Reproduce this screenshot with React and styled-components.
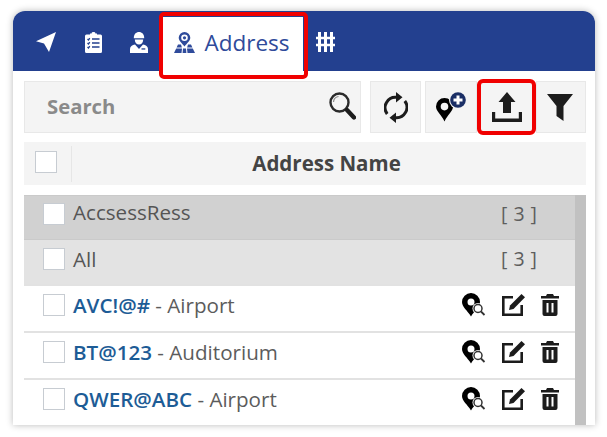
import React from 'react'
import styled, { createGlobalStyle } from 'styled-components'

const GlobalStyle = createGlobalStyle`
  html, body { margin: 0; padding: 0; background: #fff; }
  body { font-family: 'Open Sans', 'Noto Sans', sans-serif; }
`

const Page = styled.div`
  width: 607px;
  height: 437px;
  box-sizing: border-box;
  padding: 11px 12px 12px 13px;
  overflow: hidden;
`

const Card = styled.div`
  height: 414px;
  background: #fff;
  border-radius: 12px 12px 0 0;
  box-shadow: 0 0 7px rgba(0, 0, 0, 0.28);
  display: flex;
  flex-direction: column;
`

const TabBar = styled.div`
  height: 60px;
  flex: none;
  box-sizing: border-box;
  padding: 6px 0 0 10px;
  background: #23408f;
  border-radius: 12px 12px 0 0;
  display: flex;
  align-items: stretch;
`

const IconTab = styled.div`
  width: 46.5px;
  padding: 0 0 4px ${p => p.$shift || 0}px;
  box-sizing: border-box;
  display: flex;
  align-items: center;
  justify-content: center;
  color: #fff;
`

const ActiveTab = styled.div`
  width: 140px;
  position: relative;
  background: #fff;
  color: #2f4b9b;
  display: flex;
  align-items: center;
  gap: 10px;
  padding: 0 0 3px 11px;
  box-sizing: border-box;
  font-size: 22.5px;
  &::after {
    content: '';
    position: absolute;
    top: -5px;
    left: -4px;
    right: -5px;
    bottom: -8px;
    border: 4px solid #f00000;
    border-radius: 5px;
  }
`

const Toolbar = styled.div`
  display: flex;
  align-items: center;
  height: 56px;
  margin: 8px 9px 0 11px;
`

const SearchBox = styled.div`
  flex: 1;
  height: 52px;
  margin-right: 9px;
  box-sizing: border-box;
  background: #f4f4f4;
  border: 1px solid #e8e8e8;
  display: flex;
  align-items: center;
  justify-content: space-between;
  padding: 0 4px 2px 22px;
  font-size: 20.3px;
  font-weight: 700;
  color: #8a8a8a;
`

const ToolButton = styled.div`
  width: ${p => p.$w}px;
  height: 52px;
  margin-right: ${p => p.$gap || 0}px;
  padding-right: ${p => p.$nudge || 0}px;
  box-sizing: border-box;
  background: #f4f4f4;
  border: 1px solid #e8e8e8;
  display: flex;
  align-items: center;
  justify-content: center;
`

const MarkedButton = styled.div`
  width: 59px;
  height: 56px;
  box-sizing: border-box;
  background: #f4f4f4;
  border: 4px solid #f00000;
  border-radius: 6px;
  display: flex;
  align-items: center;
  justify-content: center;
`

const TableHead = styled.div`
  height: 43px;
  flex: none;
  margin: 7px 9px 0 11px;
  background: #f4f4f4;
  display: flex;
  align-items: center;
  font-size: 20.5px;
  font-weight: 700;
  color: #444;
`

const HeadCheck = styled.div`
  width: 48px;
  height: 36px;
  box-sizing: border-box;
  padding: 5px 0 0 11px;
  border-right: 1px solid #e6e6e6;
`

const HeadTitle = styled.div`
  flex: 1;
  text-align: center;
  padding: 0 5px 2px 0;
`

const Check = styled.div`
  width: 22px;
  height: 22px;
  flex: none;
  box-sizing: border-box;
  background: #fff;
  border: 1px solid #c7ccd2;
`

const ListArea = styled.div`
  flex: 1;
  min-height: 0;
  margin: 10px 9px 0 11px;
  display: flex;
`

const Rows = styled.div`
  flex: 1;
  display: flex;
  flex-direction: column;
`

const ScrollTrack = styled.div`
  width: 11px;
  flex: none;
  background: #c1c1c1;
`

const GroupRow = styled.div`
  height: ${p => p.$h}px;
  flex: none;
  box-sizing: border-box;
  padding: ${p => p.$top}px 38px 0 19px;
  background: ${p => p.$bg};
  border-top: 1px solid ${p => p.$line};
  display: flex;
  align-items: flex-start;
  gap: 8px;
  font-size: 20.6px;
  color: #555;
`

const GroupName = styled.div`
  flex: 1;
  line-height: 22px;
  margin-top: ${p => p.$lift || 0}px;
`

const Count = styled.div`
  font-size: 19.5px;
  line-height: 22px;
  color: #5e5e5e;
  word-spacing: 1px;
`

const ItemRow = styled.div`
  height: 47px;
  flex: none;
  box-sizing: border-box;
  padding: 0 16px 7px 19px;
  border-top: 2px solid #e2e2e2;
  display: flex;
  align-items: center;
  gap: 8px;
  font-size: 20.6px;
  color: #5c5c5c;
`

const ItemText = styled.div`
  flex: 1;
  white-space: nowrap;
`

const ItemCode = styled.span`
  font-weight: 600;
  color: #1d5c96;
`

const Actions = styled.div`
  display: flex;
  align-items: center;
  gap: 16px;
  color: #1c1c1c;
`

const NavIcon = () => (
  <svg width="20" height="20" viewBox="0 0 20 20" fill="currentColor">
    <path d="M20 0 0 9.2l8 2.4L13 20z" />
  </svg>
)

const ClipboardIcon = () => (
  <svg width="17" height="21" viewBox="0 0 17 21">
    <path fill="#fff" d="M1.500 2.500h3.500V1.500h1.500a2 1.400 0 0 1 4 0H12v1h3.500A1.500 1.500 0 0 1 17 4v15.500a1.500 1.500 0 0 1-1.500 1.500h-14A1.500 1.500 0 0 1 0 19.500V4a1.500 1.500 0 0 1 1.500-1.500z" />
    <path stroke="#23408f" strokeWidth="1.300" fill="none" d="M7 7h7.500M7 11h7.500M7 15h7.500M2.500 7l1 1 1.300-1.800M2.500 11l1 1 1.300-1.800M2.500 15l1 1 1.300-1.800" />
  </svg>
)

const WorkerIcon = () => (
  <svg width="18" height="21" viewBox="0 0 18 21" fill="#fff">
    <path d="M3.800 6.200C3.800 2.200 6 0 9 0s5.200 2.200 5.200 6.200z" />
    <path d="M4.800 7.400h8.400C13.100 10.600 11.500 12.400 9 12.400S4.900 10.600 4.800 7.400z" />
    <path d="M5 12.400 9 17l4-4.600c2.800.6 5 2 5 4.600v4H0v-4c0-2.600 2.200-4 5-4.600z" />
    <path fill="#23408f" d="M11.500 16.300h3.800v1.300h-3.800z" />
  </svg>
)

const AddressIcon = () => (
  <svg width="21" height="21" viewBox="0 0 21 21" fill="#2f4b9b">
    <path fillRule="evenodd" d="M10.500 0a5.800 5.800 0 0 1 5.800 5.800c0 3-3.300 5.500-5.800 8.700-2.500-3.200-5.800-5.700-5.800-8.700A5.800 5.800 0 0 1 10.500 0zm0 2.500a3.300 3.300 0 1 0 0 6.600 3.300 3.300 0 0 0 0-6.600z" />
    <circle cx="10.500" cy="5.800" r="1.600" />
    <path d="M4 12.500h3l.9 3H2.600zM14 12.500h3l1.400 3h-5.300zM2.200 16.500h5.800l-.5 4.500H0zM9 16.500h3l.4 4.500H8.600zM13 16.500h5.800l2.200 4.500h-7.500z" />
  </svg>
)

const FenceIcon = () => (
  <svg width="19" height="20" viewBox="0 0 19 20" fill="none" stroke="#fff">
    <path strokeWidth="3" d="M3.500 0v20M9.500 0v20M15.500 0v20" />
    <path strokeWidth="2.600" d="M0 6h19M0 13h19" />
  </svg>
)

const LensIcon = () => (
  <svg width="27" height="28" viewBox="0 0 27 28" fill="none">
    <circle cx="10.500" cy="10.500" r="9" stroke="#2a2a2a" strokeWidth="2.400" />
    <path d="M4.500 10a6 6 0 0 1 5-5.500" stroke="#888" strokeWidth="1.200" />
    <path d="M18 18l7 7.500" stroke="#1c1c1c" strokeWidth="4.400" strokeLinecap="round" />
  </svg>
)

const RefreshIcon = () => (
  <svg width="24" height="31" viewBox="0 0 24 31" fill="none">
    <path stroke="#1c1c1c" strokeWidth="3" d="M3.200 22A10.500 10.500 0 0 1 13 5.300M20.800 9A10.500 10.500 0 0 1 11 25.700" />
    <path fill="#1c1c1c" d="M12 0l6.500 5.300L12 10.500zM12 20.500v10.500l-6.500-5.300z" />
  </svg>
)

const PinPlusIcon = () => (
  <svg width="31" height="30" viewBox="0 0 31 30">
    <path fillRule="evenodd" fill="#000" d="M8.500 6a8.500 8.500 0 0 1 8.500 8.500c0 5-5.500 8-8.500 15C5.500 22.500 0 19.500 0 14.500A8.500 8.500 0 0 1 8.500 6zm0 4.800a3.800 3.800 0 1 0 0 7.600 3.800 3.800 0 0 0 0-7.600z" />
    <circle cx="22" cy="8" r="9" fill="#f4f4f4" />
    <circle cx="22" cy="8" r="7.800" fill="#1b2f66" />
    <path stroke="#fff" strokeWidth="3" d="M22 3.500v9M17.500 8h9" />
  </svg>
)

const UploadIcon = () => (
  <svg width="30" height="30" viewBox="0 0 30 30" fill="#1c1c1c">
    <path d="M15 0l8.500 10H19V21h-8V10H6.500z" />
    <path d="M0 20h3.200v6.600h23.600V20H30V30H0z" />
  </svg>
)

const FunnelIcon = () => (
  <svg width="26" height="27" viewBox="0 0 26 27" fill="#1c1c1c">
    <path d="M0 0h26L16.500 12v15l-7-5V12z" />
  </svg>
)

const PinSearchIcon = () => (
  <svg width="24" height="24" viewBox="0 0 24 24" fill="none">
    <path fillRule="evenodd" fill="#000" d="M9 0a9 9 0 0 1 9 9c0 5-5.500 8.500-9 14.500C5.500 17.500 0 14 0 9a9 9 0 0 1 9-9zm0 5.500a3.500 3.500 0 1 0 0 7 3.500 3.500 0 0 0 0-7z" />
    <circle cx="16" cy="15.500" r="5.500" fill="#fff" />
    <circle cx="16" cy="15.500" r="4" stroke="#333" strokeWidth="1.500" />
    <path stroke="#333" strokeWidth="1.800" d="M19 18.500l3.500 3.500" />
  </svg>
)

const EditIcon = () => (
  <svg width="23" height="22" viewBox="0 0 23 22" fill="none">
    <path stroke="#1c1c1c" strokeWidth="2.600" d="M11 3.300H1.300v17.400h18.400V11" />
    <path fill="#1c1c1c" d="M19.500 0L23 3.200 11.500 15l-4.500 1 1-4.500z" />
  </svg>
)

const TrashIcon = () => (
  <svg width="18" height="22" viewBox="0 0 18 22" fill="#1c1c1c">
    <path d="M6 0h6l1 2h5v2.500H0V2h5z" />
    <path fillRule="evenodd" d="M1.500 6h15v14a2 2 0 0 1-2 2h-11a2 2 0 0 1-2-2zm4 3v9.500h2V9zm5 0v9.500h2V9z" />
  </svg>
)

const items = [
  { code: 'AVC!@#', kind: 'Airport' },
  { code: 'BT@123', kind: 'Auditorium' },
  { code: 'QWER@ABC', kind: 'Airport' },
]

export default function App() {
  return (
    <Page>
      <GlobalStyle />
      <Card>
        <TabBar>
          <IconTab><NavIcon /></IconTab>
          <IconTab $shift={2}><ClipboardIcon /></IconTab>
          <IconTab><WorkerIcon /></IconTab>
          <ActiveTab><AddressIcon />Address</ActiveTab>
          <IconTab><FenceIcon /></IconTab>
        </TabBar>
        <Toolbar>
          <SearchBox>Search<LensIcon /></SearchBox>
          <ToolButton $w={51} $gap={4}><RefreshIcon /></ToolButton>
          <ToolButton $w={52}><PinPlusIcon /></ToolButton>
          <MarkedButton><UploadIcon /></MarkedButton>
          <ToolButton $w={50} $nudge={2}><FunnelIcon /></ToolButton>
        </Toolbar>
        <TableHead>
          <HeadCheck><Check /></HeadCheck>
          <HeadTitle>Address Name</HeadTitle>
        </TableHead>
        <ListArea>
          <Rows>
            <GroupRow $h={44} $top={7} $bg="#d1d1d1" $line="#cacaca">
              <Check />
              <GroupName $lift={-2}>AccsessRess</GroupName>
              <Count>[ 3 ]</Count>
            </GroupRow>
            <GroupRow $h={45} $top={8} $bg="#e3e3e3" $line="#cacaca">
              <Check />
              <GroupName>All</GroupName>
              <Count>[ 3 ]</Count>
            </GroupRow>
            {items.map(item => (
              <ItemRow key={item.code}>
                <Check />
                <ItemText><ItemCode>{item.code}</ItemCode> - {item.kind}</ItemText>
                <Actions>
                  <PinSearchIcon />
                  <EditIcon />
                  <TrashIcon />
                </Actions>
              </ItemRow>
            ))}
          </Rows>
          <ScrollTrack />
        </ListArea>
      </Card>
    </Page>
  )
}
